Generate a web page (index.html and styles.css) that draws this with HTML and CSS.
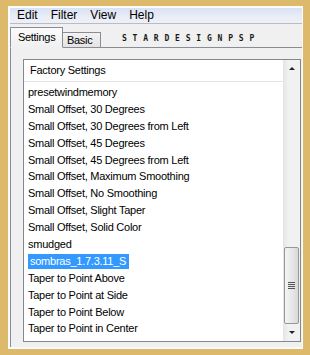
FILE: index.html
```html
<!DOCTYPE html>
<html lang="en">
<head>
    <meta charset="UTF-8">
    <title>Presets</title>
    <link rel="stylesheet" href="styles.css">
</head>
<body>
    <div class="window">
        <!-- menu -->
        <div class="menubar">
            <span class="menu-item">Edit</span>
            <span class="menu-item">Filter</span>
            <span class="menu-item">View</span>
            <span class="menu-item">Help</span>
        </div>

        <!-- tabs -->
        <div class="tabs">
            <div class="tab active">Settings</div>
            <div class="tab">Basic</div>
            <span class="watermark">STARDESIGNPSP</span>
        </div>

        <div class="panel">
            <div class="listbox">
                <div class="list-main">
                    <div class="list-header">Factory Settings</div>
                    <ul class="items">
                        <li>presetwindmemory</li>
                        <li>Small Offset, 30 Degrees</li>
                        <li>Small Offset, 30 Degrees from Left</li>
                        <li>Small Offset, 45 Degrees</li>
                        <li>Small Offset, 45 Degrees from Left</li>
                        <li>Small Offset, Maximum Smoothing</li>
                        <li>Small Offset, No Smoothing</li>
                        <li>Small Offset, Slight Taper</li>
                        <li>Small Offset, Solid Color</li>
                        <li>smudged</li>
                        <li class="selected"><span>sombras_1.7.3.11_S</span></li>
                        <li>Taper to Point Above</li>
                        <li>Taper to Point at Side</li>
                        <li>Taper to Point Below</li>
                        <li>Taper to Point in Center</li>
                    </ul>
                </div>
                <div class="scrollbar">
                    <div class="scroll-btn"><span class="arrow-up"></span></div>
                    <div class="track">
                        <div class="thumb"><span class="grip"></span></div>
                    </div>
                    <div class="scroll-btn"><span class="arrow-down"></span></div>
                </div>
            </div>
        </div>
    </div>
</body>
</html>
```

FILE: styles.css
```css
* {
    margin: 0;
    padding: 0;
    box-sizing: border-box;
}

body {
    width: 310px;
    height: 355px;
    padding: 6px 7px 6px 8px;
    background-color: #ddb96b;
    font-family: "Liberation Sans", Arial, sans-serif;
    color: #000;
    overflow: hidden;
}

.window {
    height: 343px;
    display: flex;
    flex-direction: column;
    background-color: #f0f0f0;
    border-top: 2px solid #fbfbfb;
    border-left: 2px solid #fbfbfb;
    border-right: 1px solid #fbfbfb;
    border-bottom: 2px solid #fbfbfb;
}

/* menu bar */
.menubar {
    height: 16px;
    display: flex;
    align-items: center;
    padding-left: 0.5px;
    background: linear-gradient(#d9e1f3, #e9edf7 60%, #eef0f7);
    border-bottom: 1px solid #b7bcc8;
    font-size: 12px;
}

.menu-item {
    padding: 0 6.5px;
    line-height: 15px;
}

/* tabs */
.tabs {
    height: 24px;
    margin-bottom: -1px;
    display: flex;
    align-items: flex-end;
    font-size: 11px;
    letter-spacing: -0.3px;
    position: relative;
    z-index: 1;
}

.tab {
    border: 1px solid #898c95;
    border-bottom: none;
    background: linear-gradient(#f2f2f2, #e3e3e3);
    height: 15px;
    margin-bottom: 1px;
    width: 38px;
    padding-left: 4px;
    line-height: 14px;
    border-left: none;
}

.tab.active {
    height: 21px;
    width: 53px;
    margin-bottom: 0;
    padding-left: 7px;
    line-height: 19px;
    border-left: 1px solid #898c95;
    border-bottom: 1px solid #f0f0f0;
    background: linear-gradient(#fbfbfb, #f0f0f0);
}

.watermark {
    margin-left: 21px;
    margin-bottom: 5px;
    font-family: "DejaVu Sans Mono", monospace;
    font-weight: bold;
    font-size: 8px;
    letter-spacing: 5.8px;
    line-height: 8px;
    color: #1a1a1a;
}

.panel {
    flex: 1;
    border-top: 1px solid #898c95;
    border-left: 1px solid #898c95;
    padding: 11px 0 0 12px;
}

/* list box */
.listbox {
    width: 278px;
    height: 283px;
    display: flex;
    border: 1px solid #828790;
    background-color: #fff;
    font-size: 11px;
    letter-spacing: -0.25px;
}

.list-main {
    flex: 1;
}

.list-header {
    height: 22px;
    line-height: 21px;
    padding-left: 6px;
    border-bottom: 1px solid #e5e5e5;
}

.items {
    list-style: none;
    padding-top: 2px;
}

.items li {
    height: 16.9px;
    line-height: 16.9px;
    padding-left: 4px;
    white-space: nowrap;
}

.items li.selected span {
    display: inline-block;
    padding: 0 3px 0 2px;
    line-height: 15px;
    background-color: #3399ff;
    color: #fff;
}

/* scroll bar */
.scrollbar {
    width: 17px;
    display: flex;
    flex-direction: column;
    background: linear-gradient(90deg, #e4e4e4, #f1f1f1 30%, #f1f1f1);
}

.scroll-btn {
    height: 17px;
    display: flex;
    justify-content: center;
    align-items: center;
}

.arrow-up {
    border-left: 3px solid transparent;
    border-right: 3px solid transparent;
    border-bottom: 3px solid #222;
}

.arrow-down {
    border-left: 3px solid transparent;
    border-right: 3px solid transparent;
    border-top: 3px solid #222;
}

.track {
    flex: 1;
    display: flex;
    flex-direction: column;
    justify-content: flex-end;
}

.thumb {
    height: 77px;
    margin: 0 1px;
    border: 1px solid #979797;
    border-radius: 2px;
    background: linear-gradient(90deg, #f4f4f4, #e8e8e8 50%, #d9d9d9);
    display: flex;
    justify-content: center;
    align-items: center;
}

.grip {
    width: 7px;
    height: 7px;
    background: repeating-linear-gradient(#555 0, #555 1px, transparent 1px, transparent 2px);
}
```
